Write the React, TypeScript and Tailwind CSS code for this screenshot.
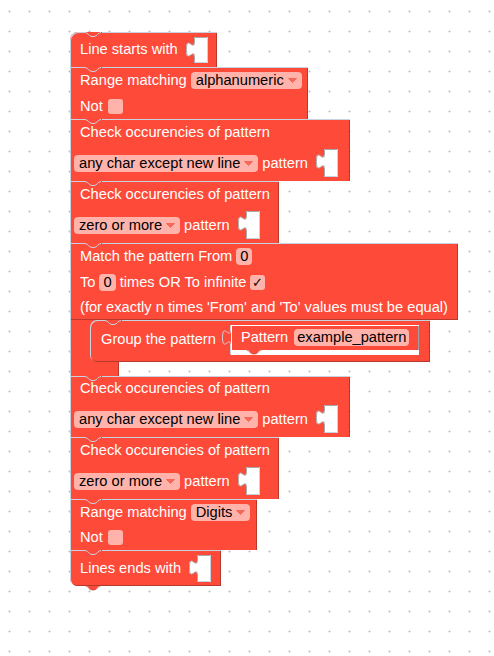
import React from 'react';

// Blockly-like workspace: a single stack of regex blocks

function Notch() {
  return (
    <svg className="absolute top-0 left-[15px]" width="17" height="6" viewBox="0 0 17 6">
      <rect x="0" y="0" width="17" height="1" fill="#fe4a39" />
      <path d="M0 0.5 C3 0.5 4 4.5 7 4.5 H9 C12 4.5 13 0.5 16 0.5" fill="none" stroke="#c8d2e0" />
    </svg>
  );
}

function BottomTab() {
  return (
    <svg className="absolute top-full left-[15px]" width="17" height="6" viewBox="0 0 17 6">
      <path d="M0 -1 C3 -1 4 4 7 4 H9 C12 4 13 -1 16 -1 Z" fill="#fe4a39" />
      <path d="M0.5 0 C3 0 4 4 7 4 H9 C12 4 13 0 15.5 0" fill="none" stroke="#b8382b" strokeOpacity="0.6" />
    </svg>
  );
}

function Slot({ h }: { h: number }) {
  const d = `M22 0 H8 V5 C8 15 0 -3 0 12.5 S8 10 8 20 V${h} H22 Z`;
  return (
    <svg className="shrink-0 ml-[4px]" width="22" height={h} viewBox={`0 0 22 ${h}`}>
      <path d={d} fill="#ffffff" />
      <path
        d={`M21.5 0.5 H8.5 V5 C8.5 15 0.5 -3 0.5 12.5 S8.5 10 8.5 20 V${h}`}
        fill="none"
        stroke="#a8a8a8"
      />
      <path d={`M8.5 ${h - 0.5} H21.5 V0.5`} fill="none" stroke="#c8d2e0" />
    </svg>
  );
}

function Dropdown({ label }: { label: string }) {
  return (
    <span className="flex items-center h-[17px] rounded-[4px] bg-[#ffb3aa] pl-[5px] pr-[5px] text-black">
      {label}
      <svg className="ml-[4px]" width="9" height="5" viewBox="0 0 9 5">
        <path d="M0.5 0.5 H8.5 L4.5 4.5 Z" fill="#f5695b" strokeLinejoin="round" stroke="#f5695b" />
      </svg>
    </span>
  );
}

function NumField({ value }: { value: string }) {
  return (
    <span className="flex items-center h-[17px] rounded-[4px] bg-[#ffb3aa] px-[4px] text-black">
      {value}
    </span>
  );
}

function Check({ checked = false }: { checked?: boolean }) {
  return (
    <span className="flex items-center justify-center w-[15px] h-[15px] rounded-[3px] bg-[#ffb3aa] text-black text-[13px]">
      {checked ? '✓' : ''}
    </span>
  );
}

function CheckPattern({ mode, h, w }: { mode: string; h: string; w: string }) {
  return (
    <div className={`relative bg-[#fe4a39] shadow-[inset_1px_1px_0_#c8d2e0,inset_-1px_0_0_#b8382b] ${w}`}>
      <Notch />
      <div className={`flex items-center ${h} pl-[10px]`}>Check occurencies of pattern</div>
      <div className="flex items-center h-[36px] pl-[4px] gap-[4px]">
        <Dropdown label={mode} />
        <span>pattern</span>
        <Slot h={28} />
      </div>
    </div>
  );
}

export default function App() {
  return (
    <div className="min-h-[656px] w-full bg-white bg-[radial-gradient(circle_at_10.5px_10.5px,#bdbdbd_0.7px,transparent_1.3px)] bg-[length:20px_20px] bg-[position:-1px_1px] pl-[70px] pt-[32px] font-['Liberation_Sans',Arial,sans-serif] text-[14.67px] leading-none text-white">
      <div className="flex flex-col items-start">
        {/* Line starts with */}
        <div className="relative w-[147px] rounded-tl-[8px] bg-[#fe4a39] shadow-[inset_1px_1px_0_#c8d2e0,inset_-1px_0_0_#b8382b]">
          <Notch />
          <div className="flex items-center h-[35px] pl-[10px] gap-[4px]">
            <span>Line starts with</span>
            <Slot h={26} />
          </div>
        </div>

        {/* Range matching alphanumeric */}
        <div className="relative w-[238px] bg-[#fe4a39] shadow-[inset_1px_1px_0_#c8d2e0,inset_-1px_0_0_#b8382b]">
          <Notch />
          <div className="flex items-center h-[26px] pl-[10px] gap-[4px]">
            <span>Range matching</span>
            <Dropdown label="alphanumeric" />
          </div>
          <div className="flex items-center h-[26px] pl-[10px] gap-[5px]">
            <span>Not</span>
            <Check />
          </div>
        </div>

        <CheckPattern mode="any char except new line" h="h-[26px]" w="w-[280px]" />
        <CheckPattern mode="zero or more" h="h-[26px]" w="w-[209px]" />

        {/* Match the pattern (C block) */}
        <div className="flex flex-col items-start">
          <div className="relative w-[388px] bg-[#fe4a39] shadow-[inset_1px_1px_0_#c8d2e0,inset_-1px_-1px_0_#b8382b]">
            <Notch />
            <div className="flex items-center h-[26px] pl-[10px] gap-[4px]">
              <span>Match the pattern From</span>
              <NumField value="0" />
            </div>
            <div className="flex items-center h-[26px] pl-[10px] gap-[4px]">
              <span>To</span>
              <NumField value="0" />
              <span>times OR To infinite</span>
              <Check checked />
            </div>
            <div className="flex items-center h-[25px] pl-[10px]">
              (for exactly n times 'From' and 'To' values must be equal)
            </div>
          </div>
          <div className="flex">
            <div className="w-[20px] h-[42px] bg-[#fe4a39] shadow-[inset_1px_0_0_#c8d2e0]" />
            <div className="relative w-[340px] h-[42px] rounded-l-[7px] bg-[#fe4a39] shadow-[-8px_0_0_#fe4a39,inset_1px_1px_0_#c8d2e0,inset_-1px_-1px_0_#b8382b]">
              <Notch />
              <div className="flex items-center h-full pl-[11px] pb-[3px]">
                <span>Group the pattern</span>
                <svg className="ml-[6px]" width="9" height="30" viewBox="0 0 9 30">
                  <path d="M9 0.5 H8.5 V5 C8.5 15 0.5 -3 0.5 12.5 S8.5 10 8.5 20 V29.5" fill="none" stroke="#c8d2e0" />
                </svg>
                <div className="flex flex-col w-[188px] h-[30px] bg-white">
                  <div className="relative flex items-center h-[25px] pl-[10px] gap-[6px] bg-[#fe4a39] shadow-[inset_1px_1px_0_#ffffff,inset_-1px_0_0_#a0a0a0]">
                    <span>Pattern</span>
                    <span className="flex items-center h-[17px] rounded-[4px] bg-[#ffb3aa] px-[3px] text-black">
                      example_pattern
                    </span>
                    <BottomTab />
                  </div>
                </div>
              </div>
            </div>
          </div>
          <div className="w-[49px] h-[14px] bg-[#fe4a39] shadow-[inset_1px_0_0_#c8d2e0,inset_-1px_0_0_#b8382b]" />
        </div>

        <CheckPattern mode="any char except new line" h="h-[25px]" w="w-[280px]" />
        <CheckPattern mode="zero or more" h="h-[26px]" w="w-[209px]" />

        {/* Range matching Digits */}
        <div className="relative w-[187px] bg-[#fe4a39] shadow-[inset_1px_1px_0_#c8d2e0,inset_-1px_0_0_#b8382b]">
          <Notch />
          <div className="flex items-center h-[26px] pl-[10px] gap-[4px]">
            <span>Range matching</span>
            <Dropdown label="Digits" />
          </div>
          <div className="flex items-center h-[25px] pl-[10px] gap-[5px]">
            <span>Not</span>
            <Check />
          </div>
        </div>

        {/* Lines ends with */}
        <div className="relative w-[151px] rounded-bl-[8px] bg-[#fe4a39] shadow-[inset_1px_1px_0_#c8d2e0,inset_-1px_-1px_0_#b8382b]">
          <Notch />
          <div className="flex items-center h-[36px] pl-[10px] gap-[4px]">
            <span>Lines ends with</span>
            <Slot h={27} />
          </div>
          <BottomTab />
        </div>
      </div>
    </div>
  );
}
